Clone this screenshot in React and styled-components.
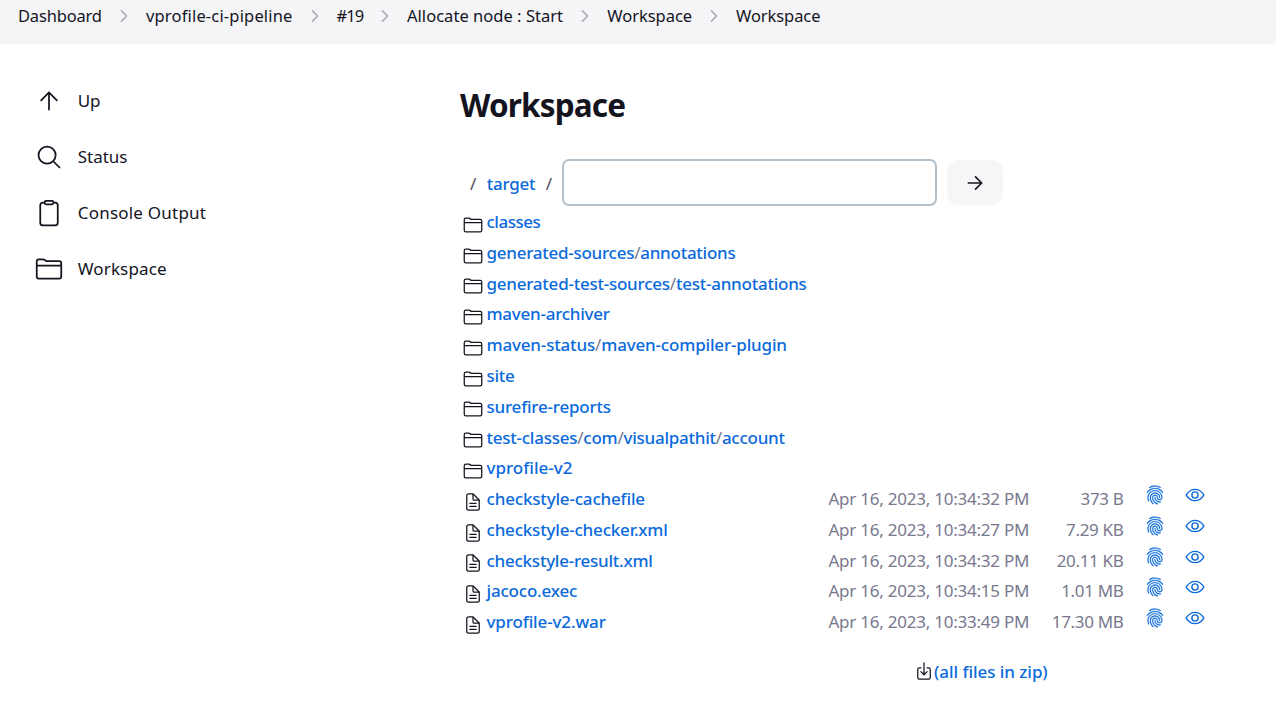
import React from "react";
import styled, { createGlobalStyle } from "styled-components";
import {
  IoArrowUpOutline, IoSearchOutline, IoClipboardOutline, IoFolderOutline,
  IoDocumentTextOutline, IoFingerPrintOutline, IoEyeOutline, IoDownloadOutline,
  IoArrowForwardOutline, IoChevronForwardOutline,
} from "react-icons/io5";

const Global = createGlobalStyle`
  * { box-sizing: border-box; }
  body {
    margin: 0;
    background: #fff;
    color: #14141f;
    font-family: "Segoe UI", "Noto Sans", sans-serif;
    font-size: 17px;
    overflow: hidden;
  }
  svg { display: block; flex: none; }
`;

const Text = styled.span`
  letter-spacing: ${(p) => p.$track || 0}px;
  white-space: pre;
`;

const Page = styled.div`
  height: 701px;
`;

const Breadcrumbs = styled.nav`
  display: flex;
  align-items: center;
  height: 44px;
  padding: 0 18px 12px;
  background: #f5f5f8;
  font-size: 16.5px;
`;

const Crumb = styled.span`
  display: flex;
  align-items: center;
  width: ${(p) => p.$width}px;
  padding-bottom: 2px;
  font-weight: 450;
`;

const Separator = styled.span`
  display: flex;
  justify-content: center;
  width: 44px;
  color: #a9a9bd;

  path { stroke-width: 46px; }
`;

const Columns = styled.div`
  display: flex;
`;

const Sidebar = styled.aside`
  display: flex;
  flex-direction: column;
  width: 460px;
  padding: 28px 0 0 35px;
`;

const Task = styled.a`
  display: flex;
  align-items: center;
  gap: 14.7px;
  height: 56px;
  font-weight: 450;

  svg { width: 28px; height: 28px; margin-top: 1px; }
  path { stroke-width: 32px; }
`;

const Main = styled.main`
  width: 760px;
  padding-top: 38px;
`;

const Title = styled.h1`
  margin: 0;
  height: 46px;
  line-height: 45px;
  font-size: 31.5px;
  font-weight: 700;
`;

const PathForm = styled.form`
  display: flex;
  align-items: center;
  height: 47px;
  margin-top: 31px;
`;

const Slash = styled.span`
  color: ${(p) => p.$color || "#4d4d5c"};
`;

const PathLead = styled.div`
  display: flex;
  align-items: center;
  justify-content: space-between;
  width: 102px;
  padding: 2px 10px 0 10px;
`;

const Link = styled.a`
  color: #0b6adb;
  font-weight: 500;
`;

const PathInput = styled.input`
  width: 375px;
  height: 47px;
  border: 2px solid #b5c1ca;
  border-radius: 7px;
  outline: none;
  background: #fff;
`;

const GoButton = styled.button`
  display: flex;
  align-items: center;
  justify-content: center;
  width: 56px;
  height: 45px;
  margin-left: 10px;
  padding: 0;
  border: 0;
  border-radius: 12px;
  background: #f6f6f9;
  color: #14141f;

  path { stroke-width: 38px; }
`;

const FileTable = styled.div`
  display: grid;
  grid-auto-rows: 30.77px;
  padding-top: 0.3px;
`;

const FileRow = styled.div`
  display: grid;
  grid-template-columns: 26.5px 342px 201px 105.5px 40px 40px;
  align-items: center;
`;

const IconCell = styled.span`
  display: flex;
  justify-content: center;
  padding-top: 6.4px;
`;

const Meta = styled.span`
  color: #78788e;
`;

const SizeCell = styled(Meta)`
  padding-right: 11.5px;
  text-align: right;
`;

const ActionCell = styled.a`
  display: flex;
  justify-content: center;
  padding-bottom: 7px;
  color: #0b6adb;

  path, circle { stroke-width: ${(p) => p.$stroke}px; }
`;

const ZipRow = styled.div`
  display: flex;
  align-items: center;
  height: 30px;
  margin: 19.5px 0 0 454px;

  svg { margin-top: -1px; }
`;

const crumbs = [
  ["Dashboard", 84, -0.18],
  ["vprofile-ci-pipeline", 146.5, 0.17],
  ["#19", 26.5, -0.9],
  ["Allocate node : Start", 156.3, 0.03],
  ["Workspace", 84.7, -0.05],
  ["Workspace", 85, -0.08],
];

const tasks = [
  [IoArrowUpOutline, "Up", 0],
  [IoSearchOutline, "Status", 0],
  [IoClipboardOutline, "Console Output", 0.22],
  [IoFolderOutline, "Workspace", 0.14],
];

const folders = [
  ["classes", -0.5],
  ["generated-sources/annotations", -0.26],
  ["generated-test-sources/test-annotations", -0.24],
  ["maven-archiver", -0.25],
  ["maven-status/maven-compiler-plugin", -0.17],
  ["site", -0.3],
  ["surefire-reports", -0.22],
  ["test-classes/com/visualpathit/account", -0.25],
  ["vprofile-v2", 0],
];

const files = [
  ["checkstyle-cachefile", -0.18, "Apr 16, 2023, 10:34:32 PM", "373 B"],
  ["checkstyle-checker.xml", -0.2, "Apr 16, 2023, 10:34:27 PM", "7.29 KB"],
  ["checkstyle-result.xml", -0.25, "Apr 16, 2023, 10:34:32 PM", "20.11 KB"],
  ["jacoco.exec", -0.2, "Apr 16, 2023, 10:34:15 PM", "1.01 MB"],
  ["vprofile-v2.war", -0.13, "Apr 16, 2023, 10:33:49 PM", "17.30 MB"],
];

const FolderPath = ({ path, track }) => (
  <Text $track={track}>
    {path.split("/").map((part, i) => (
      <React.Fragment key={part}>
        {i > 0 && <Slash $color="#78788e">/</Slash>}
        <Link>{part}</Link>
      </React.Fragment>
    ))}
  </Text>
);

export default function App() {
  return (
    <Page>
      <Global />
      <Breadcrumbs>
        {crumbs.map(([label, width, track], i) => (
          <React.Fragment key={i}>
            {i > 0 && <Separator><IoChevronForwardOutline size={18} /></Separator>}
            <Crumb $width={width}><Text $track={track}>{label}</Text></Crumb>
          </React.Fragment>
        ))}
      </Breadcrumbs>
      <Columns>
        <Sidebar>
          {tasks.map(([Icon, label, track]) => (
            <Task key={label}>
              <Icon />
              <Text $track={track}>{label}</Text>
            </Task>
          ))}
        </Sidebar>
        <Main>
          <Title><Text $track={-0.85}>Workspace</Text></Title>
          <PathForm>
            <PathLead>
              <Slash>/</Slash>
              <Link><Text $track={-0.3}>target</Text></Link>
              <Slash>/</Slash>
            </PathLead>
            <PathInput />
            <GoButton type="button"><IoArrowForwardOutline size={22} /></GoButton>
          </PathForm>
          <FileTable>
            {folders.map(([path, track]) => (
              <FileRow key={path}>
                <IconCell><IoFolderOutline size={20} /></IconCell>
                <FolderPath path={path} track={track} />
              </FileRow>
            ))}
            {files.map(([name, track, date, size]) => (
              <FileRow key={name}>
                <IconCell><IoDocumentTextOutline size={20} /></IconCell>
                <Link><Text $track={track}>{name}</Text></Link>
                <Meta><Text $track={-0.24}>{date}</Text></Meta>
                <SizeCell><Text $track={-0.33}>{size}</Text></SizeCell>
                <ActionCell $stroke={7}><IoFingerPrintOutline size={20} /></ActionCell>
                <ActionCell $stroke={36}><IoEyeOutline size={20} /></ActionCell>
              </FileRow>
            ))}
          </FileTable>
          <ZipRow>
            <IoDownloadOutline size={20} />
            <Link><Text $track={-0.05}>(all files in zip)</Text></Link>
          </ZipRow>
        </Main>
      </Columns>
    </Page>
  );
}
